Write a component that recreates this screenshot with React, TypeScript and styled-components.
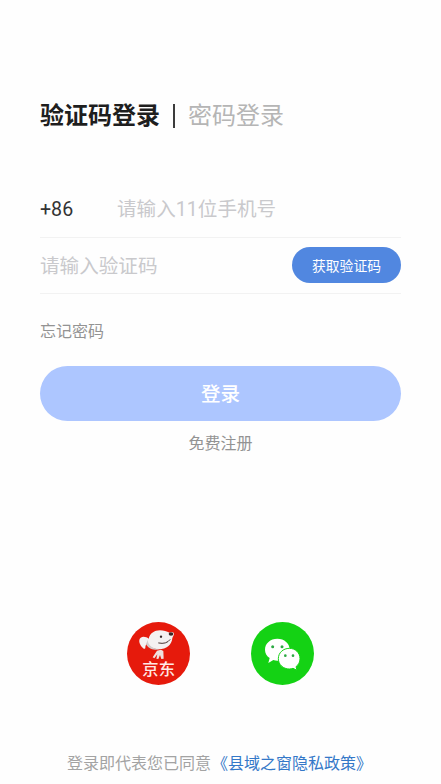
import React from "react";
import styled, { createGlobalStyle } from "styled-components";

const GlobalStyle = createGlobalStyle`
  * { box-sizing: border-box; }
  body {
    margin: 0;
    background: #fefefe;
    font-family: Roboto, "Noto Sans CJK SC", sans-serif;
  }
  button, input { font-family: inherit; border: 0; padding: 0; margin: 0; }
`;

const Screen = styled.main`
  width: 441px;
  height: 784px;
  padding: 98px 40px 0;
  display: flex;
  flex-direction: column;
  overflow: hidden;
`;

const Tabs = styled.nav`
  display: flex;
  align-items: center;
  height: 36px;
`;

const Tab = styled.button<{ $active?: boolean }>`
  background: none;
  font-size: 24px;
  line-height: 36px;
  white-space: nowrap;
  font-weight: ${(p) => (p.$active ? 700 : 400)};
  color: ${(p) => (p.$active ? "#1e1e1e" : "#b5b5b5")};
`;

const Divider = styled.span`
  width: 2px;
  height: 24px;
  margin: 0 13px 0 13px;
  background: #3c3c3c;
`;

const Form = styled.form`
  display: flex;
  flex-direction: column;
  margin-top: 47px;
`;

const Field = styled.div`
  display: flex;
  align-items: center;
  width: 361px;
  height: 56.5px;
  border-bottom: 1px solid #f2f2f2;
`;

const CountryCode = styled.span`
  width: 77px;
  padding-top: 2px;
  font-size: 19.6px;
  color: #333;
`;

const Input = styled.input`
  flex: 1;
  min-width: 0;
  height: 36px;
  padding-top: 2px;
  background: none;
  outline: none;
  font-size: 19.6px;
  color: #333;
  &::placeholder { color: #c9c9cc; opacity: 1; }
`;

const CodeButton = styled.button`
  width: 109px;
  height: 36px;
  border-radius: 18px;
  background: #5187e0;
  color: #fff;
  font-size: 13.8px;
`;

const TextLink = styled.button<{ $centered?: boolean }>`
  align-self: ${(p) => (p.$centered ? "center" : "flex-start")};
  margin-top: ${(p) => (p.$centered ? "11px" : "26px")};
  background: none;
  color: #939393;
  font-size: 16px;
  line-height: 24px;
`;

const LoginButton = styled.button`
  width: 361px;
  height: 55px;
  margin-top: 22px;
  padding-bottom: 3px;
  border-radius: 28px;
  background: #adc6ff;
  color: #fff;
  font-size: 19.6px;
  font-weight: 500;
`;

const Providers = styled.div`
  display: flex;
  gap: 61px;
  margin: 166px 0 0 87px;
`;

const Provider = styled.button`
  width: 63px;
  height: 63px;
  background: none;
  svg { display: block; }
`;

const Agreement = styled.p`
  margin: 67px 0 0 27px;
  font-size: 16px;
  line-height: 24px;
  white-space: nowrap;
  color: #a3a3a3;
`;

const PolicyLink = styled.a`
  margin-left: 1px;
  color: #3478c8;
`;

const JdLogo = () => (
  <svg width="63" height="63" viewBox="21 21 189 189">
    <circle cx="115.5" cy="115.5" r="94.5" fill="#e61a0c" />
    <path
      d="M62 68c8-5 17-2 24 3 4-16 17-25 34-25 11 0 20 3 29 7 7-4 13-1 13 5-1 5-4 7-5 12-2 20-18 33-40 33-16 0-29-7-35-18-3 3-6 6-6 13 0 4-4 5-7 1-9-8-16-23-7-31z"
      fill="#f4f1f1"
    />
    <path d="M84 74c0 5 0 8 2 12 7 11 18 16 33 16-20 6-35-2-41-15z" fill="#d2cccc" />
    <ellipse cx="153" cy="57" rx="7" ry="5" fill="#3b2525" />
    <circle cx="123" cy="65" r="3.5" fill="#352626" />
    <path d="M116 84q23 5 34-10" fill="none" stroke="#4a3433" strokeWidth="3" strokeLinecap="round" />
    <path
      d="M111 107l12-3 7 4 1 23-7 1-4-12-5 12-6-1 3-13-9 12-5-3z"
      fill="#eee2e0"
    />
    <text
      x="116"
      y="180"
      textAnchor="middle"
      fontFamily='"Noto Sans CJK SC", sans-serif'
      fontWeight="500"
      fontSize="49"
      fill="#ffe9e5"
    >
      京东
    </text>
  </svg>
);

const WechatLogo = () => (
  <svg width="63" height="63" viewBox="21 21 189 189">
    <circle cx="115.5" cy="115.5" r="94.5" fill="#14d214" />
    <path
      d="M100 71c-21 0-37 14-37 33 0 11 5 19 14 25l-4 15 15-9c4 1 8 2 12 2 21 0 37-14 37-33s-16-33-37-33z"
      fill="#fff"
    />
    <path
      d="M136 100c-18 0-33 13-33 31s15 31 33 31c4 0 8-1 11-2l12 6-3-11c8-6 12-14 12-24 0-18-14-31-32-31z"
      fill="#fff"
      stroke="#14d214"
      strokeWidth="3"
    />
    <circle cx="86" cy="95" r="4.5" fill="#2ca943" />
    <circle cx="114" cy="95" r="4.5" fill="#2ca943" />
    <circle cx="124" cy="122" r="4" fill="#2ca943" />
    <circle cx="147" cy="122" r="4" fill="#2ca943" />
  </svg>
);

export default function App() {
  return (
    <>
      <GlobalStyle />
      <Screen>
        <Tabs>
          <Tab $active>验证码登录</Tab>
          <Divider />
          <Tab>密码登录</Tab>
        </Tabs>
        <Form onSubmit={(e) => e.preventDefault()}>
          <Field>
            <CountryCode>+86</CountryCode>
            <Input type="tel" placeholder="请输入11位手机号" />
          </Field>
          <Field>
            <Input placeholder="请输入验证码" />
            <CodeButton type="button">获取验证码</CodeButton>
          </Field>
          <TextLink type="button">忘记密码</TextLink>
          <LoginButton type="submit">登录</LoginButton>
          <TextLink type="button" $centered>免费注册</TextLink>
        </Form>
        <Providers>
          <Provider aria-label="京东"><JdLogo /></Provider>
          <Provider aria-label="微信"><WechatLogo /></Provider>
        </Providers>
        <Agreement>
          登录即代表您已同意<PolicyLink>《县域之窗隐私政策》</PolicyLink>
        </Agreement>
      </Screen>
    </>
  );
}
